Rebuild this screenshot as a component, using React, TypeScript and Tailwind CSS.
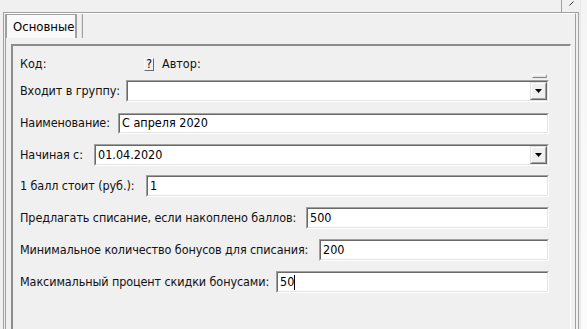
import React from 'react';

const FONT = "font-['DejaVu_Sans_Condensed','Liberation_Sans',sans-serif]";

// sunken 3d edit box, windows style
function Field({ value, caret, drop, h = 'h-[22px]' }: { value?: string; caret?: boolean; drop?: boolean; h?: string }) {
  return (
    <div className={`flex-1 ${h} flex border-t border-l border-[#a0a0a0] border-b border-r border-b-white border-r-white`}>
      <div className="flex-1 flex items-center bg-white border-t border-l border-[#696969] border-b border-r border-b-[#e3e3e3] border-r-[#e3e3e3] pl-[2px]">
        <span className="text-[12.5px] text-black leading-none">{value}</span>
        {caret && <span className="w-px h-[15px] bg-black" />}
        <div className="flex-1" />
        {drop && <DropButton />}
      </div>
    </div>
  );
}

function DropButton() {
  return (
    <div className="w-[17px] h-full flex border-t border-l border-[#e3e3e3] border-b border-r border-b-[#696969] border-r-[#696969]">
      <div className="flex-1 flex items-center justify-center bg-[#f0f0f0] border-t border-l border-white border-b border-r border-b-[#a0a0a0] border-r-[#a0a0a0]">
        <svg width="7" height="4" viewBox="0 0 7 4"><path d="M0 0h7L3.5 4z" fill="#000" /></svg>
      </div>
    </div>
  );
}

function Row({ label, labelW, children, mt }: { label: string; labelW: string; children: React.ReactNode; mt: string }) {
  return (
    <div className={`flex items-center ${mt}`}>
      <div className={`${labelW} shrink-0 text-[12.5px] tracking-[-0.1px] text-[#111] whitespace-nowrap`}>{label}</div>
      {children}
    </div>
  );
}

export default function App() {
  return (
    <div className={`w-[587px] h-[329px] overflow-hidden bg-[#f0f0f0] flex ${FONT}`}>
      <div className="w-[580px] h-full flex flex-col">
        {/* top strip with small grip box */}
        <div className="h-[12px] flex justify-end shrink-0">
          <div className="w-[17px] h-full border-l border-[#a0a0a0] mr-[2px] flex justify-end pr-[4px] pt-[1px]">
            <svg width="5" height="5" viewBox="0 0 5 5"><path d="M0.5 4.5L4.5 0.5" stroke="#333" strokeWidth="1" /></svg>
          </div>
        </div>

        {/* outer frame */}
        <div className="flex-1 ml-[3px] w-[576px] border-t border-l border-r border-[#a0a0a0] flex">
          <div className="flex-1 mr-[2px] border-r border-[#a0a0a0] border-t border-t-white flex">
            <div className="flex-1 ml-[1px] border-l border-[#a0a0a0] flex flex-col">
              {/* tab strip */}
              <div className="h-[24px] flex shrink-0">
                <div className="w-[71px] h-full border-t border-l border-[#a0a0a0] border-r-2 border-r-[#a0a0a0] bg-[#f9f9f9] flex items-center pl-[6px]">
                  <span className="text-[13px] text-black">Основные</span>
                </div>
                <div className="w-[5px] h-full border-r border-[#e3e3e3]" />
                <div className="h-full border-l border-[#a0a0a0]" />
              </div>

              {/* tab page */}
              <div className="flex-1 pl-[5px] pt-[6px] pr-[4px]">
                <div className="h-full border-t-2 border-l-2 border-[#8c8c8c] border-r border-r-white pl-[7px] pr-[21px] pt-[8px] flex flex-col">
                  <div className="flex items-center h-[20px]">
                    <div className="w-[124px] shrink-0 text-[12.5px] text-[#111]">Код:</div>
                    <div className="w-[10px] h-[13px] flex items-center justify-center border-t border-l border-white border-b border-r border-b-[#696969] border-r-[#696969] bg-[#f0f0f0] text-[12px] leading-none text-black">?</div>
                    <div className="ml-[8px] text-[12.5px] text-[#111]">Автор:</div>
                  </div>

                  <div className="relative">
                    <div className="absolute right-[2px] top-[0px] w-[15px] h-[4px] border-t border-l border-white border-b border-r border-b-[#808080] border-r-[#a0a0a0] bg-[#e8e8e8]" />
                    <Row label="Входит в группу:" labelW="w-[106px]" mt="mt-[6px]">
                      <Field drop />
                    </Row>
                  </div>

                  <Row label="Наименование:" labelW="w-[98px]" mt="mt-[11px]">
                    <Field value="С апреля 2020" h="h-[21px]" />
                  </Row>

                  <Row label="Начиная с:" labelW="w-[74px]" mt="mt-[10px]">
                    <Field value="01.04.2020" drop />
                  </Row>

                  <Row label="1 балл стоит (руб.):" labelW="w-[126px]" mt="mt-[9px]">
                    <Field value="1" />
                  </Row>

                  <Row label="Предлагать списание, если накоплено баллов:" labelW="w-[286px]" mt="mt-[10px]">
                    <Field value="500" />
                  </Row>

                  <Row label="Минимальное количество бонусов для списания:" labelW="w-[299px]" mt="mt-[10px]">
                    <Field value="200" />
                  </Row>

                  <Row label="Максимальный процент скидки бонусами:" labelW="w-[256px]" mt="mt-[10px]">
                    <Field value="50" caret />
                  </Row>
                </div>
              </div>
            </div>
          </div>
        </div>
      </div>

      {/* light strip on the right edge */}
      <div className="flex-1 h-full bg-gradient-to-b from-[#f4f4f4] via-[#f9f9f9] to-[#fbfbfb] border-l border-[#e8e8e8]" />
    </div>
  );
}
